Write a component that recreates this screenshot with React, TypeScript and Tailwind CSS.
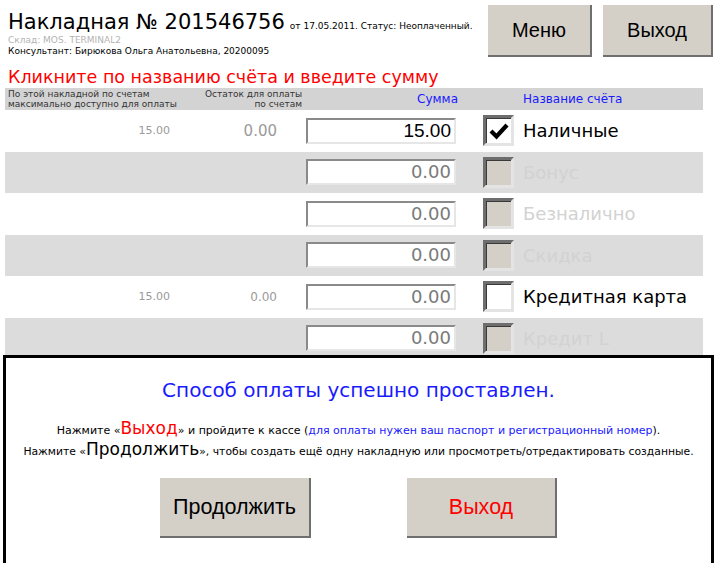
import React from "react"

const rows = [
  { max: "15.00", rest: "0.00", sum: "15.00", name: "Наличные", active: true, checked: true, big: true },
  { max: "", rest: "", sum: "0.00", name: "Бонус", active: false, checked: false },
  { max: "", rest: "", sum: "0.00", name: "Безналично", active: false, checked: false },
  { max: "", rest: "", sum: "0.00", name: "Скидка", active: false, checked: false },
  { max: "15.00", rest: "0.00", sum: "0.00", name: "Кредитная карта", active: true, checked: false },
  { max: "", rest: "", sum: "0.00", name: "Кредит L", active: false, checked: false },
]

function Check({ active, checked }: { active: boolean; checked: boolean }) {
  return (
    <div
      className={`w-[31px] h-[31px] border-[3px] border-t-[#6e6e6e] border-l-[#6e6e6e] border-b-[#e4e4e4] border-r-[#e4e4e4] flex items-center justify-center ${
        active ? "bg-white" : "bg-[#d4d0c8]"
      }`}
    >
      <div className="w-full h-full border-t border-l border-t-[#3a3a3a] border-l-[#3a3a3a] flex items-center justify-center">
        {checked && (
          <svg width="20" height="18" viewBox="0 0 20 18">
            <path d="M2 9 L7.5 14.5 L18 3" fill="none" stroke="#000" strokeWidth="4.2" />
          </svg>
        )}
      </div>
    </div>
  )
}

export default function App() {
  return (
    <div
      className="relative w-[720px] h-[563px] overflow-hidden bg-white text-black"
      style={{ fontFamily: "'DejaVu Sans', Verdana, sans-serif" }}
    >
      {/* Шапка */}
      <div className="flex justify-between">
        <div className="pl-[8px] pt-[9px]">
          <div className="flex items-baseline">
            <span className="text-[21px] leading-[26px]">Накладная № 201546756</span>
            <span className="text-[9px] ml-[5px]">от 17.05.2011. Статус: Неоплаченный.</span>
          </div>
          <div className="text-[9px] leading-[11px] text-[#b4b4b4]">Склад: MOS. TERMINAL2</div>
          <div className="text-[9px] leading-[11px]">Консультант: Бирюкова Ольга Анатольевна, 20200095</div>
        </div>
        <div className="flex gap-[11px] pt-[5px] pr-[7px]" style={{ fontFamily: "'Liberation Sans', Arial, sans-serif" }}>
          <button className="w-[104px] h-[52px] bg-[#d4d0c8] border-r-2 border-b-2 border-[#6f6f6f] text-[20px]">Меню</button>
          <button className="w-[110px] h-[52px] bg-[#d4d0c8] border-r-2 border-b-2 border-[#6f6f6f] text-[20px]">Выход</button>
        </div>
      </div>

      <div className="pl-[8px] mt-[9px] text-[17.5px] leading-[22px] text-[#ff0000]">
        Кликните по названию счёта и введите сумму
      </div>

      {/* Таблица */}
      <div className="ml-[5px] w-[698px]">
        <div className="flex h-[22px] bg-[#d3d3d3] text-[9px] leading-[10px] text-[#333] whitespace-nowrap">
          <div className="w-[210px] pl-[3px] pt-[1px]">
            По этой накладной по счетам
            <br />
            максимально доступно для оплаты
          </div>
          <div className="w-[87px] flex justify-end">
            <div className="text-right pt-[1px]">
              Остаток для оплаты
              <br />
              по счетам
            </div>
          </div>
          <div className="w-[156px] text-right text-[12px] leading-[22px] text-[#1a1aff]">Сумма</div>
          <div className="ml-[65px] text-[12px] leading-[22px] text-[#1a1aff]">Название счёта</div>
        </div>

        {rows.map((r, i) => (
          <div key={i} className={`flex items-center h-[41.5px] ${i % 2 ? "bg-[#dcdcdc]" : "bg-white"}`}>
            <div className="w-[170px] text-right pr-[5px] text-[11px] text-[#9a9a9a]">{r.max}</div>
            <div className={`w-[110px] text-right pr-[8px] text-[#9a9a9a] ${r.big ? "text-[15px]" : "text-[12px]"}`}>{r.rest}</div>
            <div
              className={`ml-[21px] w-[150px] h-[26px] bg-white border-2 border-t-[#8a8a8a] border-l-[#8a8a8a] border-b-[#e6e6e6] border-r-[#e6e6e6] text-right pr-[3px] text-[18px] leading-[22px] ${
                r.big ? "text-black" : "text-[#7a7a7a]"
              }`}
              style={r.big ? { fontFamily: "'Liberation Sans', Arial, sans-serif", fontSize: 19 } : undefined}
            >
              {r.sum}
            </div>
            <div className="ml-[27px]">
              <Check active={r.active} checked={r.checked} />
            </div>
            <div className={`ml-[9px] text-[18px] ${r.active ? "text-black" : "text-[#d2d2d2]"}`}>{r.name}</div>
          </div>
        ))}
      </div>

      {/* Окно подтверждения */}
      <div className="absolute left-[3px] top-[355px] w-[711px] h-[220px] border-[3px] border-black bg-white">
        <div className="text-center text-[20px] leading-[24px] text-[#1a1aff] mt-[20px]">Способ оплаты успешно проставлен.</div>
        <div className="mt-[17px] text-center text-[11px] leading-[19px]">
          Нажмите «<span className="text-[17px] text-[#ff0000]">Выход</span>» и пройдите к кассе (
          <span className="text-[#1a1aff]">для оплаты нужен ваш паспорт и регистрационный номер</span>).
        </div>
        <div className="text-center text-[10.8px] leading-[19px]">
          Нажмите «<span className="text-[17px]">Продолжить</span>», чтобы создать ещё одну накладную или просмотреть/отредактировать созданные.
        </div>
        <div className="flex justify-center gap-[96px] mt-[17px]" style={{ fontFamily: "'Liberation Sans', Arial, sans-serif" }}>
          <button className="w-[151px] h-[60px] bg-[#d4d0c8] border-r-2 border-b-2 border-[#6f6f6f] text-[21.5px]">Продолжить</button>
          <button className="w-[150px] h-[60px] bg-[#d4d0c8] border-r-2 border-b-2 border-[#6f6f6f] text-[21.5px] text-[#ff0000]">Выход</button>
        </div>
      </div>
    </div>
  )
}
